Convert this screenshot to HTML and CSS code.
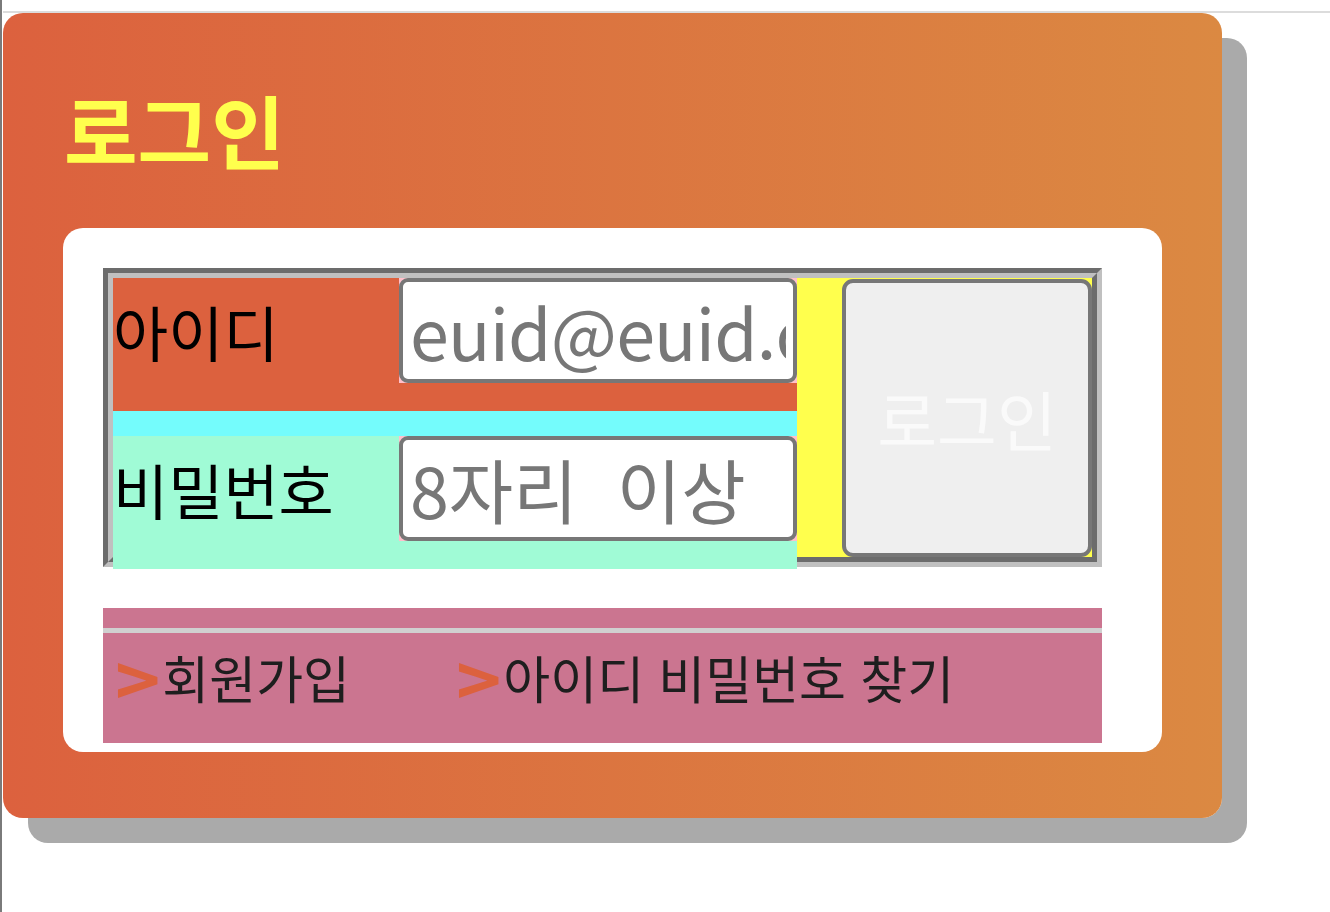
FILE: index.html
```html
<!DOCTYPE html>
<html lang="ko">
<head>
  <meta charset="UTF-8">
  <meta name="viewport" content="width=device-width, initial-scale=1.0">
  <title>로그인</title>
  <link rel="stylesheet" href="styles.css">
</head>
<body>
  <div class="page">
    <div class="rule"></div>

    <div class="card">
      <h1 class="card-title">로그인</h1>

      <div class="panel">
        <!-- 입력 영역 + 버튼 -->
        <form class="login-box">
          <div class="fields">
            <div class="field field-id">
              <label for="uid">아이디</label>
              <span class="input-wrap"><input id="uid" class="email" type="text" placeholder="euid@euid.com"></span>
            </div>
            <div class="spacer"></div>
            <div class="field field-pw">
              <label for="upw">비밀번호</label>
              <span class="input-wrap"><input id="upw" type="password" placeholder="8자리  이상"></span>
            </div>
          </div>
          <div class="submit-cell">
            <button type="submit" class="login-btn">로그인</button>
          </div>
        </form>

        <!-- 하단 링크 -->
        <div class="links">
          <hr>
          <div class="link-row">
            <a href="#" class="link"><span class="arrow">&gt;</span>회원가입</a>
            <a href="#" class="link link-find"><span class="arrow">&gt;</span>아이디 비밀번호 찾기</a>
          </div>
        </div>
      </div>
    </div>
  </div>
</body>
</html>
```

FILE: styles.css
```css
/* 기본 */
html, body {
  margin: 0;
  padding: 0;
  background: #fff;
  font-family: "Noto Sans CJK KR", "Noto Sans", sans-serif;
}

.page {
  min-height: 912px;
  box-sizing: border-box;
  border-left: 2px solid #7a7a7a;
  padding-top: 11px;
}

.rule {
  height: 2px;
  margin-left: 1px;
  background: #dcdcdc;
}

/* 주황 카드 */
.card {
  width: 1219px;
  height: 805px;
  margin-left: 1px;
  box-sizing: border-box;
  padding: 0 60px;
  border-radius: 20px;
  background: linear-gradient(to right, #dc613e, #db8942);
  box-shadow: 25px 25px 0 #aaa;
}

.card-title {
  margin: 0;
  padding: 75px 0 0 1px;
  font-size: 80px;
  line-height: 80px;
  font-weight: bold;
  color: #ffff4d;
}

/* 흰 패널 */
.panel {
  height: 524px;
  margin-top: 60px;
  box-sizing: border-box;
  padding: 40px 60px 9px 40px;
  background: #fff;
  border-radius: 20px;
}

.login-box {
  display: flex;
  align-items: flex-start;
  width: 999px;
  height: 299px;
  margin: 0;
  box-sizing: border-box;
  border: 10px groove #c0c0c0;
}

.fields {
  width: 684px;
  flex: none;
}

.field {
  display: flex;
  align-items: flex-start;
  height: 133px;
}
.field-id { background: #dc613e; }
.field-pw { background: #a0fbd6; }

.spacer {
  height: 25px;
  background: #74fcfc;
}

.field label {
  width: 286px;
  height: 105px;
  display: flex;
  align-items: center;
  font-size: 60px;
  color: #000;
}

.input-wrap {
  display: block;
  width: 398px;
  height: 105px;
  background: #ffc0cb;
}

.input-wrap input {
  width: 100%;
  height: 100%;
  box-sizing: border-box;
  margin: 0;
  padding: 0 7px;
  border: 4px solid #777;
  border-radius: 9px;
  background: #fff;
  font-family: inherit;
  font-size: 70px;
  color: #333;
  outline: none;
}
.input-wrap input::placeholder { color: #777; }
.input-wrap input.email { letter-spacing: -0.8px; }

.submit-cell {
  flex: 1;
  height: 279px;
  box-sizing: border-box;
  padding-top: 1px;
  display: flex;
  justify-content: flex-end;
  background: #ffff4d;
}

.login-btn {
  width: 250px;
  height: 278px;
  margin: 0;
  border: 4px solid #777;
  border-radius: 11px;
  background: #efefef;
  font-family: inherit;
  font-size: 65px;
  color: #fafafa;
  cursor: pointer;
}

/* 링크 영역 */
.links {
  width: 999px;
  height: 135px;
  margin-top: 41px;
  padding-top: 20px;
  box-sizing: border-box;
  background: #cb7590;
}

.links hr {
  height: 5px;
  margin: 0;
  border: none;
  background: #d0d0d0;
}

.link-row {
  display: flex;
  margin-top: 8px;
  padding-left: 14px;
}

.link {
  display: flex;
  align-items: center;
  height: 72px;
  font-size: 51px;
  color: #1e1e1e;
  text-decoration: none;
}

.link-find { margin-left: 108px; }

.arrow {
  font-size: 70px;
  line-height: 1;
  font-weight: bold;
  color: #dc613e;
  margin-right: 4px;
  transform: scaleX(1.1);
}
```
